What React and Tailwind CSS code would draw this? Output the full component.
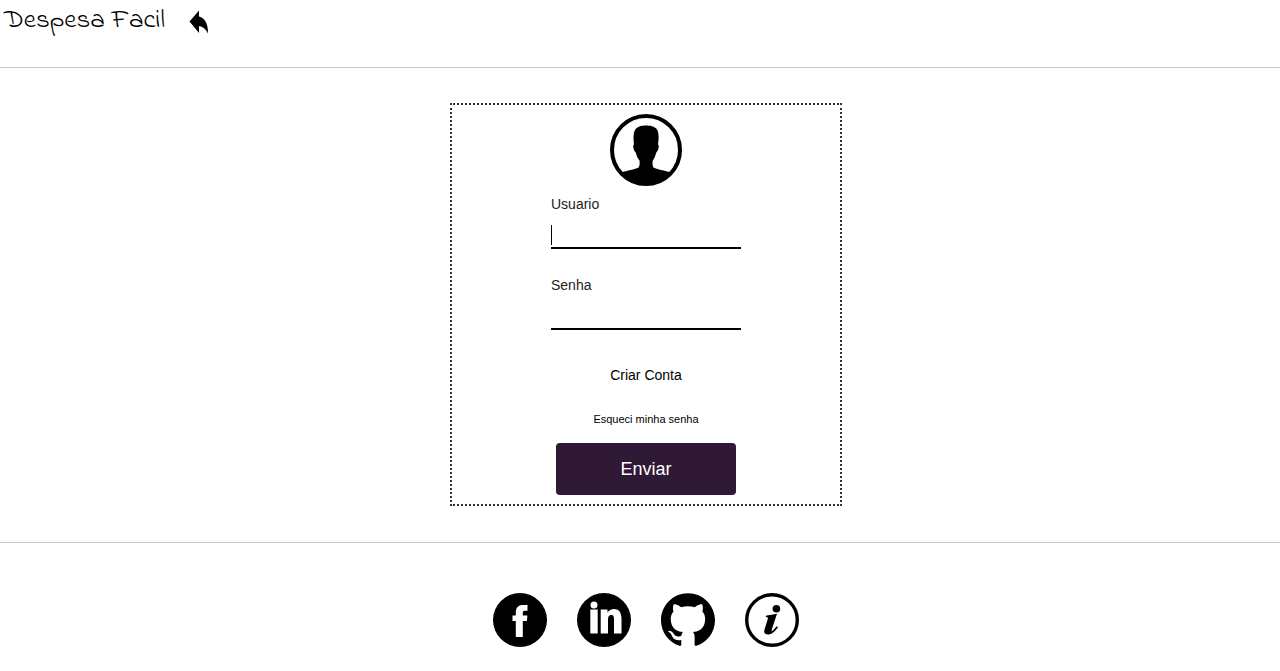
import React from "react";

function BackArrow() {
  return (
    <svg viewBox="0 0 20 24" className="h-6 w-5" aria-hidden="true">
      <path d="M0.500 11.500 L10 0.500 V6.500 C15.500 8 19.300 13 19 23.500 C17 19 13.500 16.500 10 16 V23 Z" />
    </svg>
  );
}

function Avatar() {
  return (
    <svg viewBox="0 0 72 72" className="size-[72px]" role="img" aria-label="Perfil">
      <circle cx="36" cy="36" r="34" fill="#fff" stroke="#000" strokeWidth="4" />
      <path d="M11 58.500 C17 56.500 25 55.500 28.500 53.500 C29.800 52 29.800 49 29.500 46.500 C27.500 44.500 26.500 41 25.500 38 C23.800 37.500 22.300 31 24 30.500 C23.300 26 23 19 25.300 15.500 C28 12 32 11.500 36 11.500 C40 11.500 44.500 12 47 15.500 C49.200 19 48.700 26 48 30.500 C49.700 31 48.200 37.500 46.500 38 C45.500 41 44.500 44.500 42.800 46.500 C42.300 49 42.300 52 43.500 53.500 C47 55.500 55 56.500 61 58.500 C47 74.500 25 74.500 11 58.500 Z" />
    </svg>
  );
}

function FacebookIcon() {
  return (
    <svg viewBox="0 0 54 54" className="size-[54px]" aria-hidden="true">
      <circle cx="27" cy="27" r="27" />
      <path fill="#fff" d="M22.800 44 V28 H19.500 V22.600 H22.800 V19.500 C22.800 14.500 25.500 12 30 12 H34.500 V17.800 H31.800 C30.300 17.800 29.800 18.500 29.800 20 V22.600 H34.400 L33.900 28 H29.800 V44 Z" />
    </svg>
  );
}

function LinkedinIcon() {
  return (
    <svg viewBox="0 0 54 54" className="size-[54px]" aria-hidden="true">
      <circle cx="27" cy="27" r="27" />
      <g fill="#fff">
        <circle cx="17" cy="12" r="3.500" />
        <path d="M13.300 16.500 H20.700 V40.500 H13.300 Z" />
        <path d="M23.700 16.500 H30.500 V19.500 C32 17.300 34.500 16 37 16 C42.500 16 44.500 20 44.500 26 V40.500 H37 V27.500 C37 24 36.800 22 34.300 22 C31.500 22 31 24.300 31 27.500 V40.500 H23.700 Z" />
      </g>
    </svg>
  );
}

function GithubIcon() {
  return (
    <svg viewBox="0 0 54 54" className="size-[54px]" aria-hidden="true">
      <path transform="translate(0 -0.500) scale(2.250)" d="M12 .297c-6.630 0-12 5.373-12 12 0 5.303 3.438 9.800 8.205 11.385.600.113.820-.258.820-.577 0-.285-.010-1.040-.015-2.040-3.338.724-4.042-1.610-4.042-1.610C4.422 18.070 3.633 17.700 3.633 17.700c-1.087-.744.084-.729.084-.729 1.205.084 1.838 1.236 1.838 1.236 1.070 1.835 2.809 1.305 3.495.998.108-.776.417-1.305.760-1.605-2.665-.300-5.466-1.332-5.466-5.930 0-1.310.465-2.380 1.235-3.220-.135-.303-.540-1.523.105-3.176 0 0 1.005-.322 3.300 1.230.960-.267 1.980-.399 3-.405 1.020.006 2.040.138 3 .405 2.280-1.552 3.285-1.230 3.285-1.230.645 1.653.240 2.873.120 3.176.765.840 1.230 1.910 1.230 3.220 0 4.610-2.805 5.625-5.475 5.920.420.360.810 1.096.810 2.220 0 1.606-.015 2.896-.015 3.286 0 .315.210.690.825.570C20.565 22.092 24 17.592 24 12.297c0-6.627-5.373-12-12-12" />
    </svg>
  );
}

function InfoIcon() {
  return (
    <svg viewBox="0 0 54 54" className="size-[54px]" aria-hidden="true">
      <circle cx="27" cy="27" r="25.300" fill="#fff" stroke="#000" strokeWidth="3.400" />
      <circle cx="31.400" cy="15.700" r="3.800" />
      <path d="M21.500 22.500 C25 22.200 28.500 21.600 32 20.800 L26.800 36.500 C26.400 38 27 38.300 28 37.400 C29.300 36.300 30.400 34.800 31.600 33.200 L33 34.200 C30 38.700 26.500 41.500 22.800 41.500 C19.500 41.500 18.700 39.200 19.500 36.600 L22.800 26 C23.300 24.500 22.600 24 20.500 24 Z" />
    </svg>
  );
}

const links = [
  { name: "Facebook", Icon: FacebookIcon },
  { name: "LinkedIn", Icon: LinkedinIcon },
  { name: "GitHub", Icon: GithubIcon },
  { name: "Sobre", Icon: InfoIcon },
];

function Field({ id, label, type, active }) {
  return (
    <div className="flex w-full flex-col gap-2">
      <label htmlFor={id} className="text-sm leading-5 text-[#222]">
        {label}
      </label>
      <div className="relative flex">
        <input
          id={id}
          type={type}
          className="h-[27px] w-full border-b-2 border-black bg-transparent text-base caret-transparent outline-none"
        />
        {active && <span className="pointer-events-none absolute left-0 top-[3px] h-5 w-px bg-black" />}
      </div>
    </div>
  );
}

export default function App() {
  return (
    <div className="bg-white font-['Liberation_Sans',Arial,sans-serif] text-black">
      <header className="flex h-[68px] items-start gap-6 border-b border-[#c8c8c8] pt-[5px] pl-1">
        <h1 className="font-['Indie_Flower','Lato',cursive] text-[27px] leading-8 font-normal text-black">
          Despesa Facil
        </h1>
        <a href="#voltar" aria-label="Voltar" className="pt-[5px]">
          <BackArrow />
        </a>
      </header>

      <main className="flex justify-center border-b border-[#c8c8c8] pt-[35px] pb-9 pl-3">
        <form className="flex w-full max-w-[392px] flex-col items-center border-2 border-dotted border-[#333] py-[9px]">
          <Avatar />
          <div className="mt-2 flex w-[190px] flex-col gap-[26px]">
            <Field id="usuario" label="Usuario" type="text" active />
            <Field id="senha" label="Senha" type="password" />
          </div>
          <a href="#criar-conta" className="mt-[35px] text-sm leading-5">
            Criar Conta
          </a>
          <a href="#esqueci" className="mt-[26px] text-[11px] leading-4">
            Esqueci minha senha
          </a>
          <button type="button" className="mt-4 h-[52px] w-[180px] rounded bg-[#301934] text-lg text-white">
            Enviar
          </button>
        </form>
      </main>

      <footer className="flex justify-center gap-[30px] pt-[50px] pb-6 pl-3">
        {links.map(({ name, Icon }) => (
          <a key={name} href={"#" + name.toLowerCase()} aria-label={name}>
            <Icon />
          </a>
        ))}
      </footer>
    </div>
  );
}
